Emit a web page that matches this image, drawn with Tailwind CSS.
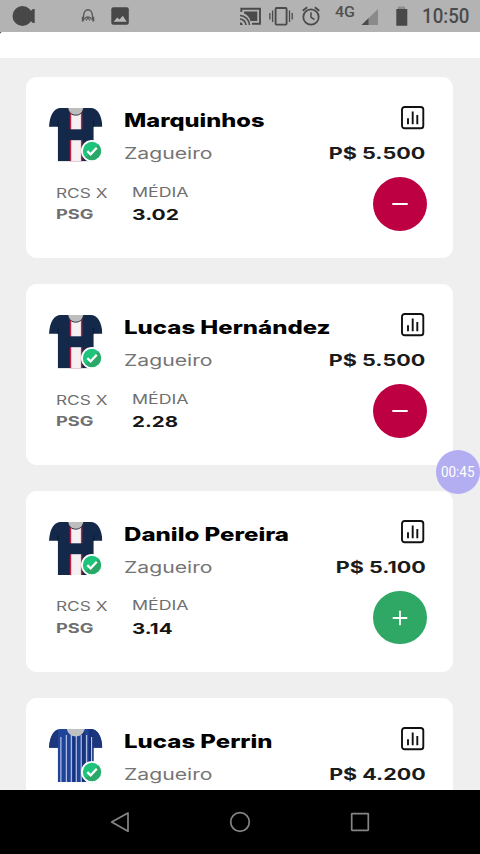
<!DOCTYPE html>
<html lang="pt-BR">
<head>
<meta charset="utf-8">
<title>Zagueiros</title>
<script src="https://cdn.jsdelivr.net/npm/@tailwindcss/browser@4"></script>
</head>
<body class="bg-black">
<svg width="0" height="0" class="absolute">
  <defs>
    <clipPath id="body"><path d="M11 0H43C49 1 53 6 54 19H45V54H9V19H0C1 6 5 1 11 0Z"/></clipPath>
    <symbol id="shirt-psg" viewBox="0 0 54 54">
      <g clip-path="url(#body)">
        <rect width="54" height="54" fill="#14294a"/>
        <rect x="21" y="0" width="12.6" height="54" fill="#c51f45"/>
        <rect x="22.4" y="0" width="9.8" height="54" fill="#f5f1f2"/>
        <rect x="20" y="21.5" width="15" height="11" fill="#14294a"/>
        <path d="M9 13V19M45 13V19" stroke="#0c1c36" stroke-width="1"/>
      </g>
      <path d="M19 0H35C34 5 31 7 27 7S20 5 19 0Z" fill="#bcbdbc"/>
      <path d="M19 0C20 5 23 7.2 27 7.2S34 5 35 0" fill="none" stroke="#252c3b" stroke-width="1"/>
    </symbol>
    <symbol id="shirt-rcs" viewBox="0 0 54 54">
      <g clip-path="url(#body)">
        <rect width="54" height="54" fill="#20439a"/>
        <path d="M0 0H9V20H0ZM45 0H54V20H45Z" fill="#1b367d"/>
        <path d="M24 0H27V54H24ZM33 0H36V54H33ZM40 0H45V54H40Z" fill="#173277"/>
        <path d="M12 8V54M17.5 6V54M22.5 6V54M27.5 6V54M32.5 6V54M38 6V54M43 8V54" stroke="#c3cfee" stroke-width="1.1"/>
      </g>
      <path d="M18 0H36C35 5 31 7.500 27 7.500S19 5 18 0Z" fill="#bfc2c0"/>
    </symbol>
    <symbol id="check" viewBox="0 0 22 22">
      <circle cx="11" cy="11" r="11" fill="#fff"/>
      <circle cx="11" cy="11" r="9.200" fill="#1fc47c"/>
      <path d="M17.500 4.500A9.200 9.200 0 0 1 4.500 17.500Z" fill="#2ba867"/>
      <path d="M6.300 11.200L9.600 14.300L15.800 7.800" fill="none" stroke="#fff" stroke-width="2.300"/>
    </symbol>
    <symbol id="stats" viewBox="0 0 24 24">
      <rect x="1" y="1" width="21.300" height="21.300" rx="2.600" fill="none" stroke="#111" stroke-width="1.900"/>
      <path d="M7 12.300V18.200M11.700 5.400V18.200M16.300 9V18.200" stroke="#111" stroke-width="1.900"/>
    </symbol>
  </defs>
</svg>

<div class="flex h-[854px] w-[480px] flex-col overflow-hidden font-['Inter',sans-serif]">
  <header class="flex h-8 shrink-0 items-center bg-[#b3b3b3]">
    <svg class="h-8 w-[240px] shrink-0" viewBox="0 0 240 32" fill="none">
      <circle cx="22.500" cy="16" r="10" fill="#484848"/>
      <path d="M30 11.500L33 9H34.700V23H33L30 20.500Z" fill="#484848"/>
      <path d="M83.500 20V16.500C83.500 7.500 92.500 7.500 92.500 16.500V20" stroke="#5a5a5a" stroke-width="1.500"/>
      <path d="M82.800 16.800V21.500M93.300 16.800V21.500" stroke="#5a5a5a" stroke-width="2"/>
      <path d="M84.500 19.500C86 16 90 16 91.500 19.500M86 20.500L88 18L90 20.500" stroke="#5a5a5a" stroke-width="1.200"/>
      <rect x="111.300" y="7.300" width="17.500" height="17.500" rx="2" fill="#484848"/>
      <path d="M113.500 21.800L117.300 17.500L119.500 19.600L122.800 15.800L126.700 21.800Z" fill="#b8b8b8"/>
    </svg>
    <svg class="h-8 w-[90px] shrink-0" viewBox="240 0 90 32" fill="none" stroke="#4b4b4b">
      <path d="M241.300 12V8.700H260V23.800H252" stroke-width="1.900"/>
      <path d="M244 11.600H257.300V21H250.500C249.500 17 247 14.500 244 13.500Z" fill="#4b4b4b" stroke="none"/>
      <path d="M240 15.500C245 15.500 249.500 20 249.500 25M240 19C243 19 246 22 246 25" stroke-width="1.600"/>
      <path d="M240 22.200A3 3 0 0 1 242.800 25H240Z" fill="#4b4b4b" stroke="none"/>
      <rect x="275.600" y="8" width="11" height="16.600" rx="1" stroke-width="1.900"/>
      <path d="M272.600 10.500V22M269.900 13V19.500M289.500 10.500V22M292.200 13V19.500" stroke-width="1.300"/>
      <circle cx="311" cy="17" r="7.700" stroke-width="1.800"/>
      <path d="M311 12.300V17.300L314.500 19.500" stroke-width="1.500"/>
      <path d="M302.700 10.800L307.200 7.200M319.300 10.800L314.800 7.200" stroke-width="1.800"/>
    </svg>
    <div class="mb-[10px] ml-[5px] w-[26px] shrink-0"><span data-w="20" class="inline-block origin-left font-['Roboto',sans-serif] text-[15px] leading-[18px] font-medium whitespace-nowrap text-[#505050]">4G</span></div>
    <svg class="h-8 w-[61px] shrink-0" viewBox="361 0 61 32">
      <path d="M378 9V25H361.500Z" fill="#8a8a8a"/>
      <path d="M368.500 18.200V25H361.500Z" fill="#4b4b4b"/>
      <path d="M398.500 7H404.500V9H407.300V25.700H396.300V9H398.500Z" fill="#484848"/>
      <path d="M398.500 6.500H404.500V9H398.500Z" fill="#8d8d8d"/>
    </svg>
    <div class="pt-[2px]"><span data-w="47.500" class="block origin-left font-['Roboto',sans-serif] text-[19.500px] leading-8 font-medium whitespace-nowrap text-[#4b4b4b]">10:50</span></div>
  </header>
  <div class="h-[26px] shrink-0 rounded-tl-[2px] bg-white"></div>
  <main id="list" class="flex min-h-0 flex-1 flex-col gap-[26.400px] overflow-hidden bg-[#efefef] px-[26px] pt-[19.300px]"></main>
  <nav class="grid h-16 shrink-0 grid-cols-3 items-center justify-items-center bg-black px-[60px] text-[#858585]">
    <svg class="size-6" viewBox="0 0 24 24" fill="none" stroke="currentColor" stroke-width="1.700" stroke-linejoin="round"><path d="M20 3V21.200L3.700 12.100Z"/></svg>
    <svg class="size-6" viewBox="0 0 24 24" fill="none" stroke="currentColor" stroke-width="1.700"><circle cx="12" cy="12" r="9.300"/></svg>
    <svg class="size-6" viewBox="0 0 24 24" fill="none" stroke="currentColor" stroke-width="1.700"><rect x="3.700" y="3.700" width="16.600" height="16.600" rx=".5"/></svg>
  </nav>
</div>

<div class="absolute top-[449.500px] left-[435.500px] flex size-[44.500px] items-center rounded-full bg-[#b3adf1] pl-[5.500px]">
  <span data-w="33.500" class="block origin-left font-['Roboto',sans-serif] text-[14px] leading-5 whitespace-nowrap text-white">00:45</span>
</div>

<script>
const players = [
  {name:'Marquinhos', nw:140.500, price:'P$ 5.500', pw:96.500, avg:'3.02', aw:47, shirt:'psg', on:true},
  {name:'Lucas Hernández', nw:206.500, price:'P$ 5.500', pw:96.500, avg:'2.28', aw:46, shirt:'psg', on:true},
  {name:'Danilo Pereira', nw:165, price:'P$ 5.100', pw:90, avg:'3.14', aw:40.500, shirt:'psg', on:false},
  {name:'Lucas Perrin', nw:148.500, price:'P$ 4.200', pw:96.500, shirt:'rcs'},
];
const button = {
  true: '<button class="flex size-[53.500px] items-center justify-center rounded-full bg-[#bd0041]"><svg class="size-5" viewBox="0 0 20 20"><path d="M2.300 10H17.700" stroke="#fff" stroke-width="2"/></svg></button>',
  false: '<button class="flex size-[53.500px] items-center justify-center rounded-full bg-[#2fa866]"><svg class="size-5" viewBox="0 0 20 20"><path d="M2.700 10H17.300M10 2.700V17.300" stroke="#fff" stroke-width="1.800"/></svg></button>',
};
const stats = p => `
  <div class="mt-3 flex pl-[7px]">
    <div class="w-[76px] pt-[4.500px] text-[13px] leading-[22px] text-[#6f6f6f]">
      <div class="h-[21.500px]"><span data-w="51.500" class="inline-block origin-left whitespace-nowrap">RCS X</span></div>
      <div class="h-[22px]"><span data-w="37.500" class="inline-block origin-left font-bold whitespace-nowrap">PSG</span></div>
    </div>
    <div class="flex-1 pt-[3.500px] text-[13.300px] leading-[22px]">
      <div class="h-[23.300px]"><span data-w="56.500" class="inline-block origin-left whitespace-nowrap text-[#6f6f6f]">MÉDIA</span></div>
      <div class="h-[22px]"><span data-w="${p.aw}" class="inline-block origin-left text-[15px] font-bold whitespace-nowrap text-[#151515]">${p.avg}</span></div>
    </div>
    ${button[p.on]}
  </div>`;
document.getElementById('list').innerHTML = players.map(p => `
<article class="h-[180.500px] w-[427.300px] shrink-0 rounded-[11px] bg-white pt-[30.900px] pr-[26.700px] pl-[23px]">
  <div class="flex h-[57px]">
    <div class="relative h-[54px] w-[54px]">
      <svg class="size-[53.500px]"><use href="#shirt-${p.shirt}"/></svg>
      <svg class="absolute top-[32px] left-[32px] size-[22px]"><use href="#check"/></svg>
    </div>
    <div class="ml-[20.500px] flex-1">
      <div class="h-6"><span data-w="${p.nw}" class="inline-block origin-left text-[18.500px] leading-6 font-extrabold whitespace-nowrap text-black">${p.name}</span></div>
      <div class="mt-[9px] h-6"><span data-w="88.500" class="inline-block origin-left text-[15.700px] leading-6 whitespace-nowrap text-[#747474]">Zagueiro</span></div>
    </div>
    <div class="flex flex-col items-end">
      <svg class="-mt-[2px] mr-[1.500px] size-6 shrink-0"><use href="#stats"/></svg>
      <div class="mt-[11px] mr-[1px] h-6"><span data-w="${p.pw}" class="inline-block origin-right text-[15.500px] leading-6 font-bold whitespace-nowrap text-[#1b1b1b]">${p.price}</span></div>
    </div>
  </div>
  ${p.avg ? stats(p) : ''}
</article>`).join('');
const fit = new ResizeObserver(entries => entries.forEach(({target, contentRect}) => {
  target.style.transform = `scaleX(${target.dataset.w / contentRect.width})`;
}));
document.querySelectorAll('[data-w]').forEach(el => fit.observe(el));
</script>
</body>
</html>
